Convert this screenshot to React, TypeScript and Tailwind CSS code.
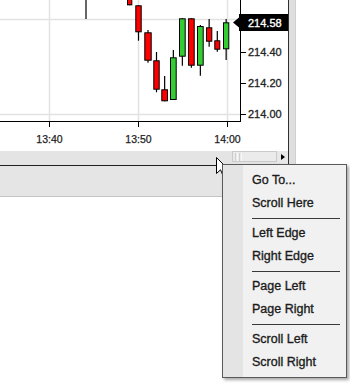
import React from 'react'

type Candle = { l: number; r: number; top: number; bot: number; wt: number; wb: number; up: boolean }

const candles: Candle[] = [
  { l: 127, r: 132.3, top: -2, bot: 5.3, wt: -2, wb: 5.3, up: false },
  { l: 135.3, r: 141.7, top: 5.3, bot: 32.3, wt: 5.3, wb: 40.7, up: false },
  { l: 144.3, r: 151.7, top: 32.3, bot: 60.7, wt: 30, wb: 62.7, up: false },
  { l: 153.3, r: 159.7, top: 60.3, bot: 89.7, wt: 52, wb: 92.3, up: false },
  { l: 161.3, r: 168, top: 89.3, bot: 101.3, wt: 76, wb: 101.3, up: false },
  { l: 170, r: 176.7, top: 57.3, bot: 100, wt: 50, wb: 100, up: true },
  { l: 179, r: 185.7, top: 18.3, bot: 56.7, wt: 18.3, wb: 65.7, up: true },
  { l: 188, r: 194.7, top: 18.3, bot: 65.7, wt: 18.3, wb: 67.7, up: false },
  { l: 197, r: 203.7, top: 26, bot: 65.7, wt: 25, wb: 75.7, up: true },
  { l: 206, r: 212.3, top: 27.3, bot: 41.7, wt: 19, wb: 46.7, up: false },
  { l: 214.3, r: 220.3, top: 40.3, bot: 49.7, wt: 31, wb: 51.7, up: false },
  { l: 223, r: 229.3, top: 22.3, bot: 49.3, wt: 19, wb: 60, up: true },
]

const priceTicks = [
  { y: 52, label: '214.40' },
  { y: 83, label: '214.20' },
  { y: 114, label: '214.00' },
]

const timeTicks = [
  { x: 49, label: '13:40' },
  { x: 138, label: '13:50' },
  { x: 227, label: '14:00' },
]

const menu: (string | null)[] = [
  'Go To...',
  'Scroll Here',
  null,
  'Left Edge',
  'Right Edge',
  null,
  'Page Left',
  'Page Right',
  null,
  'Scroll Left',
  'Scroll Right',
]

function Chart() {
  const font = "'Liberation Sans', Arial, sans-serif"
  return (
    <svg width={288} height={151} className="block">
      {timeTicks.map((t) => (
        <line key={t.x} x1={t.x + 0.5} y1={0} x2={t.x + 0.5} y2={121} stroke="#e2e2e2" strokeWidth={1.5} />
      ))}
      <line x1={0} y1={19.5} x2={240} y2={19.5} stroke="#e2e2e2" strokeWidth={1.5} />
      <line x1={0} y1={114.5} x2={240} y2={114.5} stroke="#e2e2e2" strokeWidth={1.5} />

      <line x1={86} y1={0} x2={86} y2={19} stroke="#000" strokeWidth={1.2} />
      {candles.map((c, i) => {
        const cx = (c.l + c.r) / 2
        return (
          <g key={i}>
            <line x1={cx} y1={c.wt} x2={cx} y2={c.wb} stroke="#000" strokeWidth={1.2} />
            <rect
              x={c.l + 0.5}
              y={c.top + 0.5}
              width={c.r - c.l - 1}
              height={c.bot - c.top - 1}
              fill={c.up ? '#33cc33' : '#ff0000'}
              stroke="#000"
              strokeWidth={1}
            />
          </g>
        )
      })}

      <line x1={240.5} y1={0} x2={240.5} y2={122} stroke="#000" strokeWidth={1} />
      <line x1={0} y1={121.5} x2={241} y2={121.5} stroke="#000" strokeWidth={1} />

      {timeTicks.map((t) => (
        <g key={t.label}>
          <line x1={t.x + 0.5} y1={122} x2={t.x + 0.5} y2={127} stroke="#000" strokeWidth={1} />
          <text x={t.x + 0.5} y={143} textAnchor="middle" fontFamily={font} fontSize={10.5} fill="#222" stroke="#222" strokeWidth={0.25}>
            {t.label}
          </text>
        </g>
      ))}

      {priceTicks.map((p) => (
        <g key={p.label}>
          <line x1={241} y1={p.y + 0.5} x2={246} y2={p.y + 0.5} stroke="#000" strokeWidth={1} />
          <text x={248} y={p.y + 4} fontFamily={font} fontSize={11} fill="#222" stroke="#222" strokeWidth={0.3}>
            {p.label}
          </text>
        </g>
      ))}

      <polygon points="233,22.5 239,17.5 239,14 288,14 288,31 239,31 239,27.5" fill="#000" />
      <text x={248} y={26.5} fontFamily={font} fontSize={11} fill="#fff" stroke="#fff" strokeWidth={0.35}>
        214.58
      </text>
    </svg>
  )
}

function Cursor() {
  return (
    <svg width={13} height={20} viewBox="0 0 13 20" className="absolute left-[215.5px] top-[156.5px]">
      <path d="M0.5 0.5 L0.5 16.5 L4.5 12.8 L7 18.5 L9.3 17.5 L6.9 11.9 L11.8 11.9 Z" fill="#fff" stroke="#000" strokeWidth={1} strokeLinejoin="miter" />
    </svg>
  )
}

export default function App() {
  return (
    <div className="relative w-[350px] h-[383px] overflow-hidden bg-white font-['Liberation_Sans',Arial,sans-serif]">
      <div className="flex w-[296px]">
        <div className="flex flex-col w-[289px] border-r border-[#303030]">
          <Chart />
          <div className="flex h-[14px] justify-end bg-[#e4e4e4]">
            <div className="relative h-[11px] w-[45px] border border-[#cacaca] bg-[#ebebeb]">
              <div className="absolute left-[2px] top-[1px] flex h-[8px] gap-[1px]">
                <div className="w-px bg-[#d0d0d0]" />
                <div className="w-px bg-[#f8f8f8]" />
                <div className="w-px bg-[#d0d0d0]" />
                <div className="w-px bg-[#f8f8f8]" />
              </div>
            </div>
            <div className="flex h-[12px] w-[11px] items-center justify-center bg-[#e8e8e8]">
              <div className="h-0 w-0 border-y-[3.5px] border-l-[4px] border-y-transparent border-l-black" />
            </div>
          </div>
        </div>
        <div className="w-[7px] h-[165px] border-r border-[#d0d0d0] bg-[#dedede]" />
      </div>
      <div className="h-[32px] w-[289px] border-t border-[#202020] border-b border-b-[#c4c4c4] bg-[#e5e5e5]" />

      <Cursor />

      <div className="absolute left-[222px] top-[164px] flex w-[125px] border border-[#5a5a5a] bg-[#f1f1f1] shadow-[2px_2px_3px_rgba(0,0,0,0.35)]">
        <div className="w-[20px] bg-[#e4e4e4]" />
        <div className="flex flex-1 flex-col pt-[4px] pb-[3px]">
          {menu.map((m, i) =>
            m === null ? (
              <div key={i} className="flex h-[7px] items-center pl-[9px] pr-[6px]">
                <div className="h-px w-full bg-[#3a3a3a]" />
              </div>
            ) : (
              <div key={i} className="flex h-[23px] items-center pl-[9px] text-[12.5px] text-[#1c1c1c] [-webkit-text-stroke:0.35px_#1c1c1c]">
                {m}
              </div>
            )
          )}
        </div>
      </div>
    </div>
  )
}
